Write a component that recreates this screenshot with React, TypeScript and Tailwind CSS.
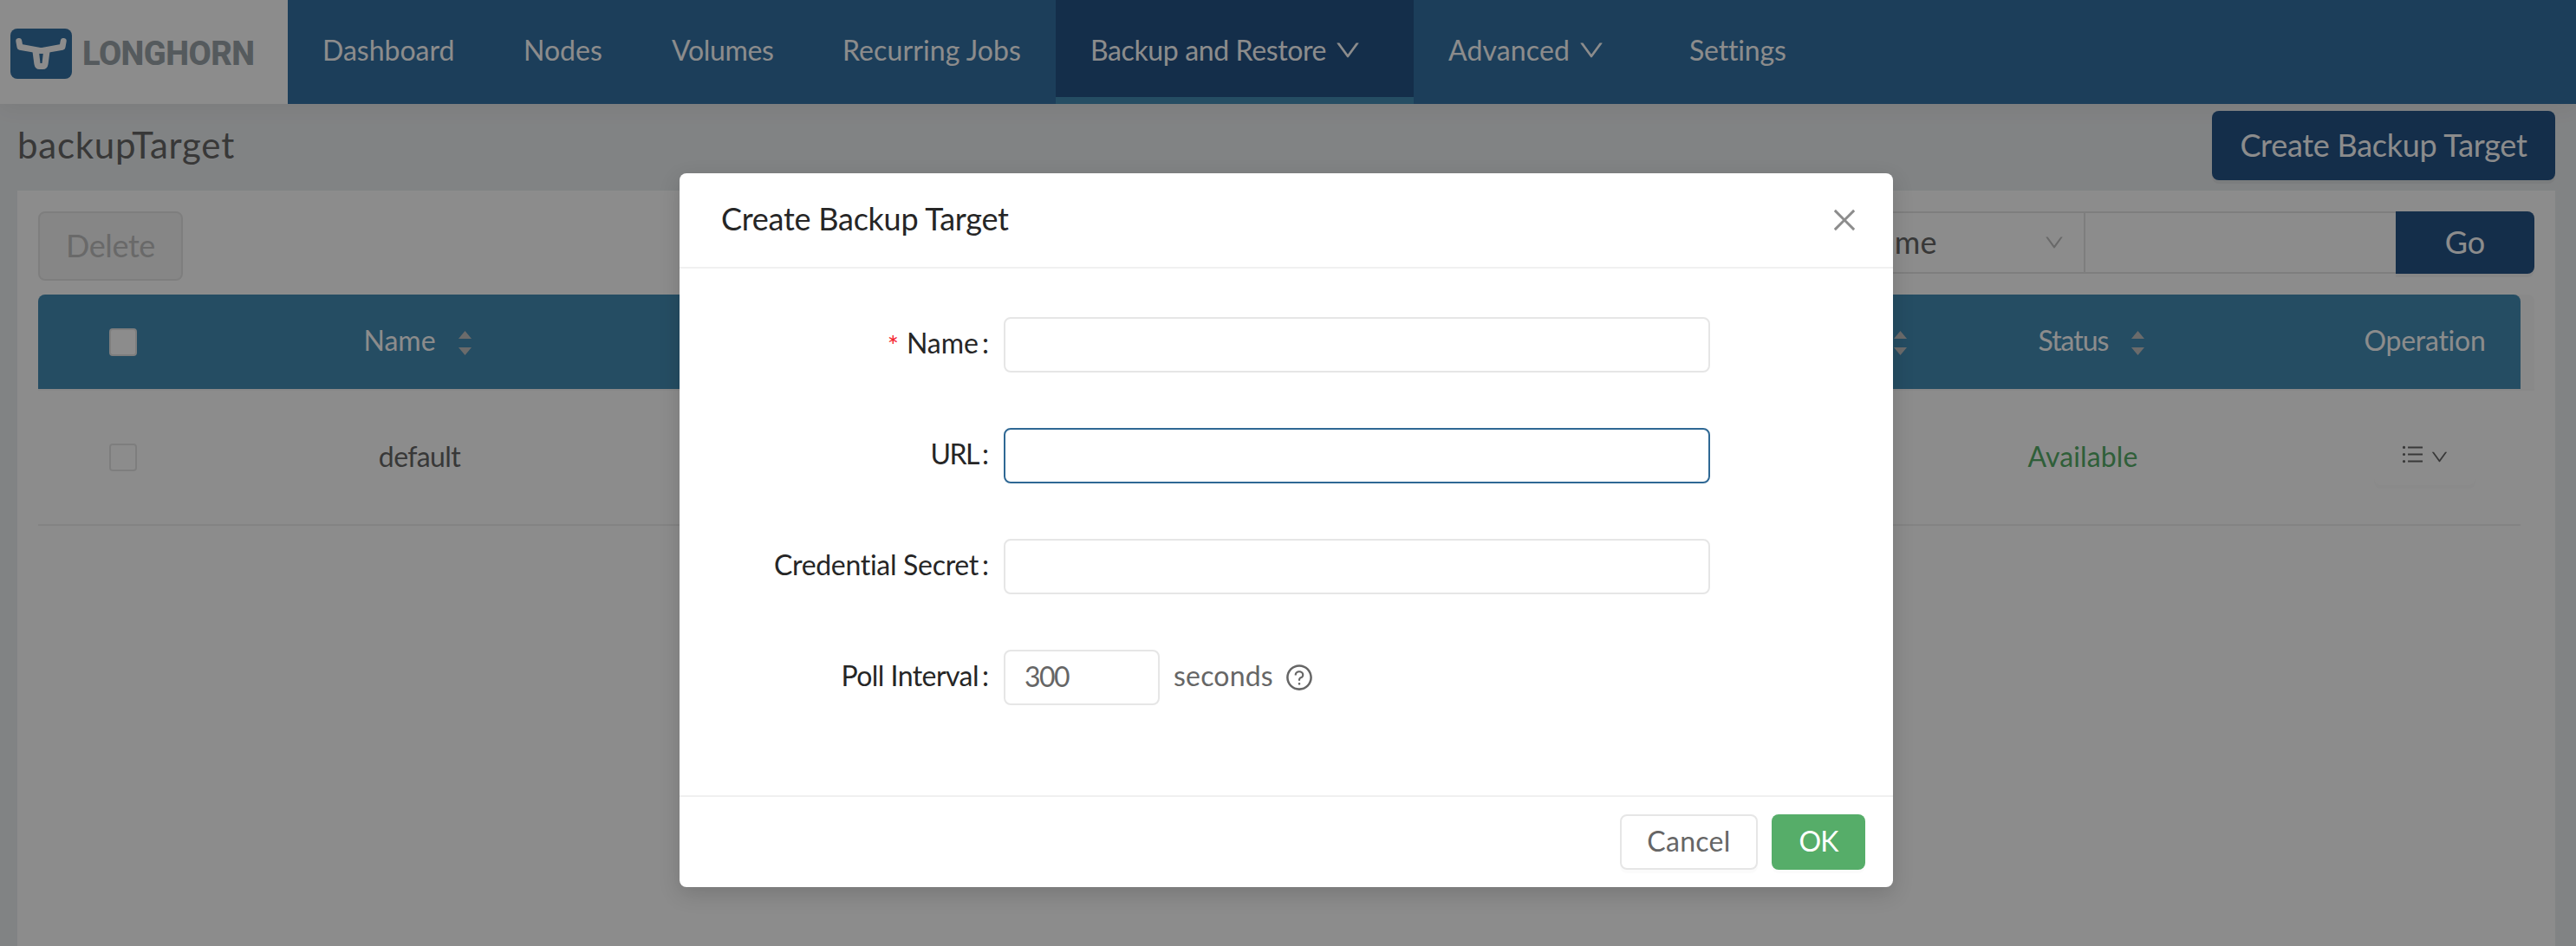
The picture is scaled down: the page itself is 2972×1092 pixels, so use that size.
import React from "react";
import {
  AiOutlineClose,
  AiOutlineDown,
  AiOutlineQuestionCircle,
  AiOutlineUnorderedList,
} from "react-icons/ai";

function Logo() {
  return (
    <div className="flex h-[120px] w-[332px] shrink-0 items-start bg-white pl-3">
      <svg className="mt-[33px] h-[58px] w-[71px] shrink-0" viewBox="0 0 71 58">
        <rect width="71" height="58" rx="8" fill="#3371a4" />
        <path
          d="M9.8 14.5 L11 21.2 L35.5 25.6 L60 21.2 L61.2 14.5"
          fill="none"
          stroke="#fff"
          strokeWidth="7"
          strokeLinecap="round"
          strokeLinejoin="round"
        />
        <path
          fillRule="evenodd"
          fill="#fff"
          d="M25.3 25 H45.7 L43.6 41 Q42.6 47 37.5 47 H33.5 Q28.4 47 27.4 41 Z M33.2 28.7 L34.5 40 H36.5 L37.8 28.7 Z"
        />
      </svg>
      <span className="ml-[12px] mt-[39px] font-[Roboto] text-[38px] font-extrabold leading-[46px] tracking-[-0.5px] text-[#9ba4a9]">
        LONGHORN
      </span>
    </div>
  );
}

function NavItem({
  label,
  width,
  tracking = "",
  menu = false,
  active = false,
}: {
  label: string;
  width: string;
  tracking?: string;
  menu?: boolean;
  active?: boolean;
}) {
  return (
    <div
      className={`flex h-[120px] shrink-0 pl-10 text-[32px] leading-[116px] text-white ${width} ${tracking} ${
        active ? "border-b-8 border-[#448cb4] bg-[#255488]" : ""
      }`}
    >
      <span className="whitespace-nowrap">{label}</span>
      {menu && <AiOutlineDown className="ml-[8px] mt-[41px] size-[34px] shrink-0" />}
    </div>
  );
}

function Sorter() {
  return (
    <svg className="mt-[3px] h-[28px] w-[15px] shrink-0" viewBox="0 0 15 28" fill="#c4c4c4">
      <path d="M7.5 0 L15 9 H0 Z" />
      <path d="M7.5 28 L15 19 H0 Z" />
    </svg>
  );
}

function Field({
  label,
  tracking = "",
  required = false,
  children,
}: {
  label: string;
  tracking?: string;
  required?: boolean;
  children: React.ReactNode;
}) {
  return (
    <div className="flex h-16 items-center">
      <div className="flex w-[374px] shrink-0 items-center justify-end pb-[4px] pr-[17px] text-[32px] leading-[60px] text-[#262626]">
        {required && <span className="mr-[9px] pt-[5px] text-[31px] leading-none text-[#f5222d]">*</span>}
        <span className={tracking}>{label}</span>
        <span className="ml-[4px]">:</span>
      </div>
      {children}
    </div>
  );
}

export default function App() {
  return (
    <div className="relative flex h-[1092px] w-full flex-col overflow-hidden bg-[#eceef0] font-[Lato,sans-serif] text-[#666]">
      <header className="z-10 flex h-[120px] shrink-0 bg-[#3371a4] shadow-[0_4px_24px_rgba(0,0,0,0.06)]">
        <Logo />
        <nav className="flex">
          <NavItem label="Dashboard" width="w-[232px]" />
          <NavItem label="Nodes" width="w-[171px]" />
          <NavItem label="Volumes" width="w-[197px]" tracking="tracking-[-0.33px]" />
          <NavItem label="Recurring Jobs" width="w-[286px]" tracking="tracking-[0.1px]" />
          <NavItem label="Backup and Restore" width="w-[413px]" tracking="tracking-[-0.38px]" menu active />
          <NavItem label="Advanced" width="w-[278px]" tracking="tracking-[0.14px]" menu />
          <NavItem label="Settings" width="w-[192px]" tracking="tracking-[-0.16px]" />
        </nav>
      </header>

      <div className="flex h-[100px] shrink-0 justify-between pl-5 pr-6">
        <h1 className="text-[42px] leading-[95px] tracking-[0.75px]">backupTarget</h1>
        <button className="z-20 mt-2 flex h-20 w-[396px] items-center justify-center whitespace-nowrap rounded-lg bg-[#255488] pb-[3px] text-[36px] tracking-[-0.28px] text-white shadow-[0_4px_0_rgba(0,0,0,0.045)]">
          Create Backup Target
        </button>
      </div>

      <main className="ml-5 mr-6 flex flex-1 flex-col bg-white px-6 pt-6">
        <div className="flex h-24 shrink-0 items-start justify-between">
          <button className="flex h-20 w-[167px] items-center justify-center rounded-lg border-2 border-[#e6e6e6] bg-[#f5f5f5] pb-[3px] text-[36px] tracking-[-0.4px] text-[#bfbfbf]">
            Delete
          </button>
          <div className="flex h-[72px]">
            <div className="flex w-[300px] items-center justify-between rounded-l-lg border-2 border-[#e6e6e6] pl-[33px] pr-[21px]">
              <span className="pb-[3px] text-[36px]">Name</span>
              <AiOutlineDown className="size-[26px] text-[#bfbfbf]" />
            </div>
            <div className="w-[358px] border-y-2 border-[#e6e6e6]" />
            <button className="flex w-40 items-center justify-center rounded-r-lg bg-[#255488] pb-[3px] text-[36px] text-white shadow-[0_4px_0_rgba(0,0,0,0.045)]">
              Go
            </button>
          </div>
        </div>

        <div className="h-[111px] shrink-0 rounded-t-lg border-b-2 border-[#f8f8f8] bg-[#fafafa] pr-4">
          <div className="flex h-[109px] rounded-t-lg bg-[#448cb4] text-[32px] text-white">
            <div className="flex w-[196px] items-center justify-center">
              <span className="size-8 rounded border-2 border-[#e6e6e6] bg-white" />
            </div>
            <div className="flex w-[488px] items-center justify-center pr-[5px]">
              <span className="mr-[26px] pb-[3px]">Name</span>
              <Sorter />
            </div>
            <div className="flex flex-1 items-center justify-end pr-[10px]">
              <Sorter />
            </div>
            <div className="flex w-[386px] items-center justify-center pl-[20px]">
              <span className="mr-[27px] pb-[3px] tracking-[-1px]">Status</span>
              <Sorter />
            </div>
            <div className="flex w-[312px] items-center justify-center pl-[91px]">
              <span className="pb-[3px] tracking-[-0.26px]">Operation</span>
            </div>
          </div>
        </div>

        <div className="mr-4 flex h-[156px] shrink-0 border-b-2 border-[#efefef] text-[32px]">
          <div className="flex w-[196px] items-center justify-center">
            <span className="size-8 rounded border-2 border-[#e6e6e6]" />
          </div>
          <div className="flex w-[488px] items-center justify-center">
            <span className="pb-[2px] tracking-[-0.6px]">default</span>
          </div>
          <div className="flex-1" />
          <div className="flex w-[386px] items-center justify-center">
            <span className="pb-[2px] tracking-[0.1px] text-[#56ad69]">Available</span>
          </div>
          <div className="flex w-[312px] items-center justify-center pl-[91px]">
            <button className="flex h-16 w-[117px] items-center justify-center rounded-lg pb-[7px] shadow-[0_4px_0_rgba(0,0,0,0.015)]">
              <AiOutlineUnorderedList className="size-[29px]" />
              <AiOutlineDown className="ml-[5px] mt-[5px] size-[23px]" />
            </button>
          </div>
        </div>
      </main>

      <div className="absolute inset-0 z-30 flex items-start justify-center bg-black/45 pr-1 pt-[200px]">
        <div
          role="dialog"
          className="flex h-[824px] w-[1400px] flex-col rounded-lg bg-white shadow-[0_8px_24px_rgba(0,0,0,0.15)]"
        >
          <div className="flex h-[110px] shrink-0 justify-between border-b-2 border-[#f0f0f0] pl-12 pr-[38px]">
            <h2 className="text-[36px] leading-[105px] tracking-[-0.25px] text-[#262626]">
              Create Backup Target
            </h2>
            <AiOutlineClose className="mt-[36px] size-[36px] text-[#8c8c8c]" />
          </div>

          <div className="flex flex-1 flex-col gap-16 pt-14">
            <Field label="Name" required>
              <div className="h-16 w-[815px] rounded-lg border-2 border-[#e6e6e6]" />
            </Field>
            <Field label="URL" tracking="tracking-[-1.5px]">
              <div className="h-16 w-[815px] rounded-lg border-2 border-[#2f6894]" />
            </Field>
            <Field label="Credential Secret" tracking="tracking-[-0.3px]">
              <div className="h-16 w-[815px] rounded-lg border-2 border-[#e6e6e6]" />
            </Field>
            <Field label="Poll Interval" tracking="tracking-[-0.55px]">
              <div className="flex h-16 w-[180px] items-center rounded-lg border-2 border-[#e6e6e6] pb-[2px] pl-[22px] text-[32px] tracking-[-1.6px]">
                300
              </div>
              <span className="ml-4 pb-[4px] text-[32px] tracking-[0.2px]">seconds</span>
              <AiOutlineQuestionCircle className="ml-[13px] size-[34px]" />
            </Field>
          </div>

          <div className="flex h-[106px] shrink-0 justify-end gap-4 border-t-2 border-[#f0f0f0] pr-8 pt-5">
            <button className="flex h-16 w-[159px] items-center justify-center rounded-lg border-2 border-[#e6e6e6] pb-[3px] text-[32px] tracking-[0.3px] shadow-[0_4px_0_rgba(0,0,0,0.015)]">
              Cancel
            </button>
            <button className="flex h-16 w-[108px] items-center justify-center rounded-lg bg-[#56ad69] pb-[3px] text-[32px] tracking-[-1px] text-white shadow-[0_4px_0_rgba(0,0,0,0.015)]">
              OK
            </button>
          </div>
        </div>
      </div>
    </div>
  );
}
